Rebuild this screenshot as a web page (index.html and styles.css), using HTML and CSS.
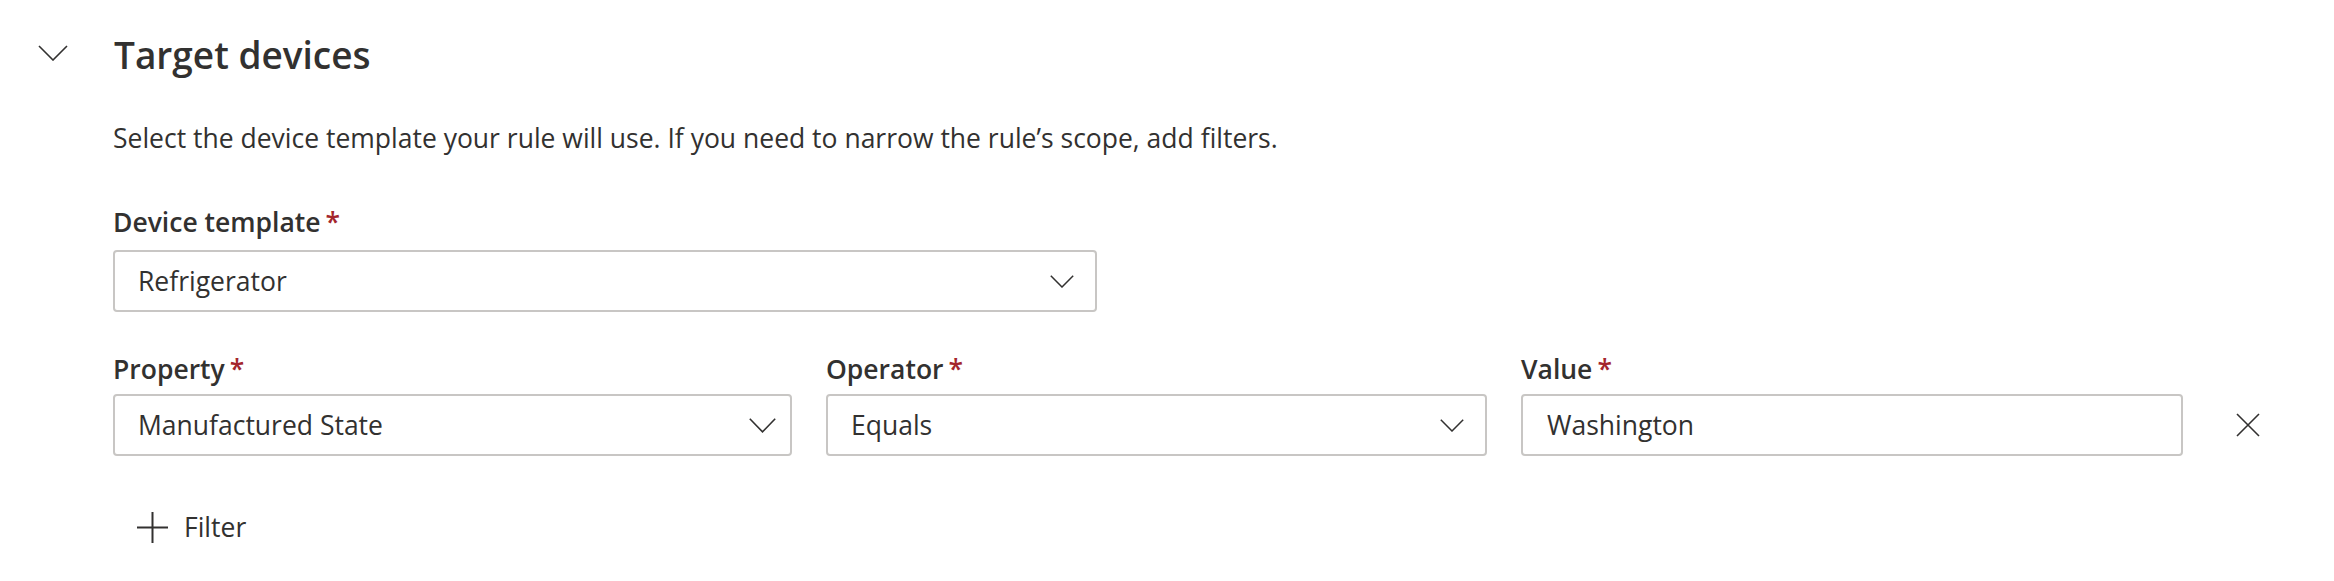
FILE: index.html
```html
<!DOCTYPE html>
<html lang="en">
<head>
<meta charset="utf-8">
<title>Target devices</title>
<link rel="stylesheet" href="styles.css">
</head>
<body>
<section class="section">
  <div class="section-header">
    <button class="collapse-btn" aria-label="Collapse">
      <svg class="collapse-icon" width="30" height="16" viewBox="0 0 30 16"><path d="M1 1 L15 15 L29 1" fill="none" stroke="#323130" stroke-width="1.6"/></svg>
    </button>
    <h2 class="title">Target devices</h2>
  </div>
  <div class="section-body">
    <p class="desc">Select the device template your rule will use. If you need to narrow the rule’s scope, add filters.</p>

    <div class="field">
      <label class="label">Device template<span class="req">*</span></label>
      <div class="dropdown dropdown-template">
        <span class="dropdown-text">Refrigerator</span>
        <svg class="dd-chevron" width="24" height="13" viewBox="0 0 24 13"><path d="M0.8 0.8 L12 12 L23.2 0.8" fill="none" stroke="#323130" stroke-width="1.5"/></svg>
      </div>
    </div>

    <div class="filter-row">
      <div class="field field-property">
        <label class="label">Property<span class="req">*</span></label>
        <div class="dropdown dropdown-property">
          <span class="dropdown-text">Manufactured State</span>
          <svg class="dd-chevron" width="27" height="15" viewBox="0 0 27 15"><path d="M0.8 0.8 L13.5 13.8 L26.2 0.8" fill="none" stroke="#323130" stroke-width="1.6"/></svg>
        </div>
      </div>
      <div class="field field-operator">
        <label class="label">Operator<span class="req">*</span></label>
        <div class="dropdown">
          <span class="dropdown-text">Equals</span>
          <svg class="dd-chevron" width="24" height="13" viewBox="0 0 24 13"><path d="M0.8 0.8 L12 12 L23.2 0.8" fill="none" stroke="#323130" stroke-width="1.5"/></svg>
        </div>
      </div>
      <div class="field field-value">
        <label class="label">Value<span class="req">*</span></label>
        <div class="textfield">
          <span class="textfield-text">Washington</span>
        </div>
      </div>
      <button class="remove-btn" aria-label="Remove filter">
        <svg width="24" height="24" viewBox="0 0 24 24"><path d="M1 1 L23 23 M23 1 L1 23" fill="none" stroke="#323130" stroke-width="1.6"/></svg>
      </button>
    </div>

    <button class="add-filter">
      <svg class="plus-icon" width="31" height="31" viewBox="0 0 31 31"><path d="M15.5 0 V31 M0 15.5 H31" fill="none" stroke="#323130" stroke-width="2"/></svg>
      <span class="add-filter-text">Filter</span>
    </button>
  </div>
</section>
</body>
</html>
```

FILE: styles.css
```css
html, body {
  margin: 0;
  padding: 0;
  background: #ffffff;
}

body {
  font-family: "Open Sans", "Noto Sans", sans-serif;
  color: #323130;
}

.section {
  padding-left: 38px;
}

.section-header {
  display: flex;
  align-items: flex-start;
  margin-top: 29px;
  height: 52px;
}

.collapse-btn {
  border: 0;
  background: none;
  padding: 0;
  margin: 16px 46px 0 0;
  width: 30px;
  height: 16px;
  display: flex;
}

.title {
  margin: 0;
  font-size: 37px;
  line-height: 52px;
  font-weight: 600;
  color: #323130;
}

.section-body {
  margin-left: 75px;
}

.desc {
  margin: 37px 0 0;
  font-size: 26.5px;
  line-height: 40px;
  font-weight: 400;
}

.field {
  display: flex;
  flex-direction: column;
}

.label {
  display: block;
  margin-top: 44px;
  font-size: 26.5px;
  line-height: 40px;
  font-weight: 600;
}

.req {
  color: #a4262c;
  margin-left: 5px;
}

.dropdown,
.textfield {
  box-sizing: border-box;
  height: 62px;
  border: 2px solid #c8c6c4;
  border-radius: 4px;
  display: flex;
  align-items: center;
  justify-content: space-between;
  padding: 0 21px 0 23px;
  font-size: 26.5px;
  margin-top: 8px;
  background: #fff;
}

.dropdown-template {
  width: 984px;
}

.dd-chevron {
  display: block;
  flex: none;
}

.dropdown-property {
  padding-right: 14px;
}

.filter-row {
  display: flex;
  align-items: flex-end;
  gap: 34px;
}

.filter-row .label {
  margin-top: 37px;
}

.filter-row .dropdown,
.filter-row .textfield {
  margin-top: 5px;
}

.field-property {
  width: 679px;
}

.field-operator {
  width: 661px;
}

.field-value {
  width: 662px;
}

.textfield {
  padding-left: 24px;
}

.remove-btn {
  border: 0;
  background: none;
  padding: 0;
  width: 62px;
  height: 62px;
  display: flex;
  align-items: center;
  justify-content: center;
}

.add-filter {
  border: 0;
  background: none;
  margin-top: 51px;
  padding: 0 0 0 24px;
  height: 40px;
  display: flex;
  align-items: center;
  gap: 16px;
  font-family: inherit;
  font-size: 26.5px;
  color: #323130;
}

.plus-icon {
  display: block;
}
```
